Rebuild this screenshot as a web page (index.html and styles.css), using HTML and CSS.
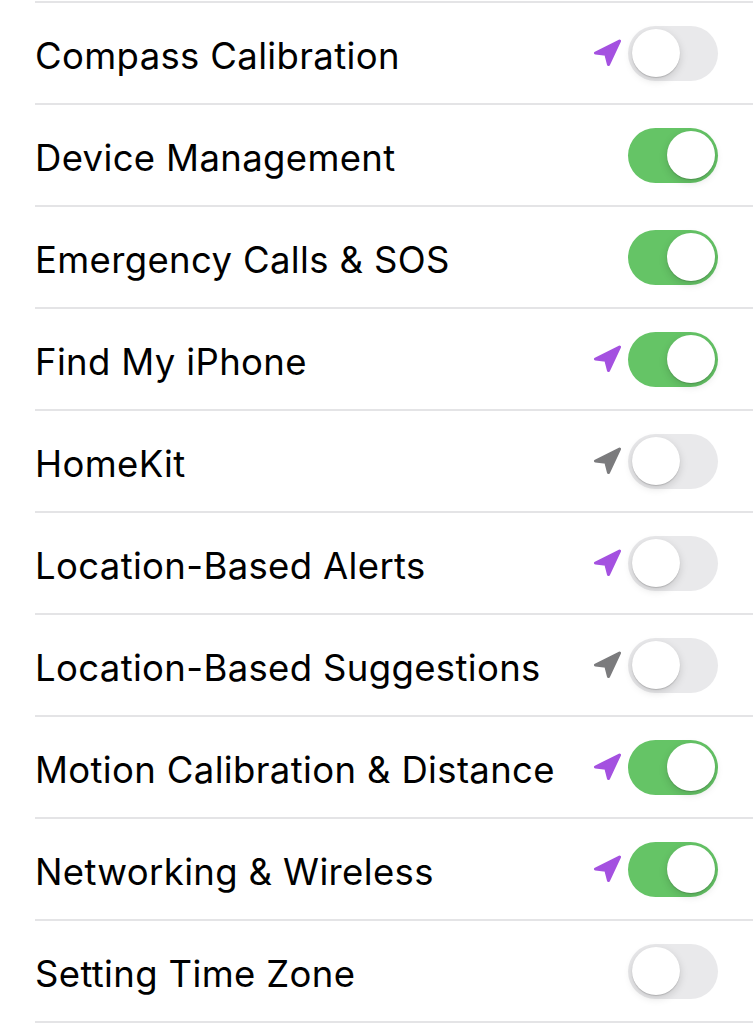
FILE: index.html
```html
<!DOCTYPE html>
<html lang="en">
<head>
<meta charset="utf-8">
<link rel="stylesheet" href="styles.css">
<title>Location Services</title>
</head>
<body>
<ul class="list">
  <li class="row"><span class="label">Compass Calibration</span><span class="ctrl"><svg class="arrow purple" viewBox="0 0 28 28"><path d="M26.5 2 L2.5 14 L12.8 15.2 L15.5 25.5 Z"/></svg><span class="toggle"></span></span></li>
  <li class="row"><span class="label">Device Management</span><span class="ctrl"><span class="toggle on"></span></span></li>
  <li class="row"><span class="label">Emergency Calls &amp; SOS</span><span class="ctrl"><span class="toggle on"></span></span></li>
  <li class="row"><span class="label">Find My iPhone</span><span class="ctrl"><svg class="arrow purple" viewBox="0 0 28 28"><path d="M26.5 2 L2.5 14 L12.8 15.2 L15.5 25.5 Z"/></svg><span class="toggle on"></span></span></li>
  <li class="row"><span class="label">HomeKit</span><span class="ctrl"><svg class="arrow gray" viewBox="0 0 28 28"><path d="M26.5 2 L2.5 14 L12.8 15.2 L15.5 25.5 Z"/></svg><span class="toggle"></span></span></li>
  <li class="row"><span class="label">Location-Based Alerts</span><span class="ctrl"><svg class="arrow purple" viewBox="0 0 28 28"><path d="M26.5 2 L2.5 14 L12.8 15.2 L15.5 25.5 Z"/></svg><span class="toggle"></span></span></li>
  <li class="row"><span class="label">Location-Based Suggestions</span><span class="ctrl"><svg class="arrow gray" viewBox="0 0 28 28"><path d="M26.5 2 L2.5 14 L12.8 15.2 L15.5 25.5 Z"/></svg><span class="toggle"></span></span></li>
  <li class="row"><span class="label">Motion Calibration &amp; Distance</span><span class="ctrl"><svg class="arrow purple" viewBox="0 0 28 28"><path d="M26.5 2 L2.5 14 L12.8 15.2 L15.5 25.5 Z"/></svg><span class="toggle on"></span></span></li>
  <li class="row"><span class="label">Networking &amp; Wireless</span><span class="ctrl"><svg class="arrow purple" viewBox="0 0 28 28"><path d="M26.5 2 L2.5 14 L12.8 15.2 L15.5 25.5 Z"/></svg><span class="toggle on"></span></span></li>
  <li class="row"><span class="label">Setting Time Zone</span><span class="ctrl"><span class="toggle"></span></span></li>
</ul>
</body>
</html>
```
FILE: styles.css
```css
html, body {
  margin: 0;
  padding: 0;
  background: #ffffff;
}
body {
  font-family: Inter, "Liberation Sans", sans-serif;
  color: #000;
}
.list {
  list-style: none;
  margin: 1px 0 0 35px;
  padding: 0;
  border-top: 2px solid #e4e4e6;
}
.row {
  height: 100px;
  border-bottom: 2px solid #e4e4e6;
  display: flex;
  align-items: center;
  justify-content: space-between;
  padding-right: 35px;
}
.label {
  font-size: 36.5px;
  letter-spacing: 0.35px;
  padding-top: 5px;
}
.ctrl {
  display: flex;
  align-items: center;
  gap: 7px;
}
.arrow {
  width: 28px;
  height: 28px;
}
.arrow path {
  stroke-linejoin: round;
  stroke-width: 3;
}
.arrow.purple path { fill: #a451e0; stroke: #a451e0; }
.arrow.gray path { fill: #7b7b7d; stroke: #7b7b7d; }
.toggle {
  position: relative;
  width: 90px;
  height: 55px;
  border-radius: 28px;
  background: #e9e9eb;
}
.toggle::after {
  content: "";
  position: absolute;
  top: 3.5px;
  left: 3.5px;
  width: 48px;
  height: 48px;
  border-radius: 50%;
  background: #fff;
  box-shadow: 0 3px 8px rgba(0,0,0,0.15), 0 1px 1px rgba(0,0,0,0.16);
}
.toggle.on {
  background: #65c466;
}
.toggle.on::after {
  left: auto;
  right: 3.5px;
}
```
